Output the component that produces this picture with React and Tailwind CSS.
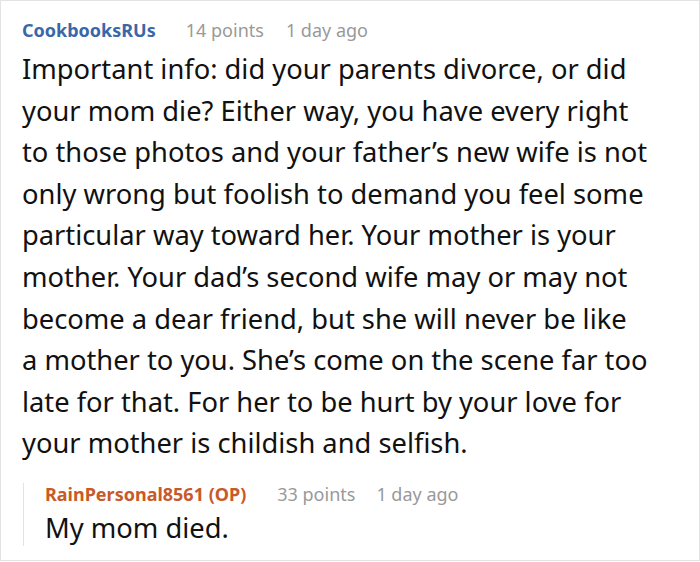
const lines = [
  "Important info: did your parents divorce, or did",
  "your mom die? Either way, you have every right",
  "to those photos and your father’s new wife is not",
  "only wrong but foolish to demand you feel some",
  "particular way toward her. Your mother is your",
  "mother. Your dad’s second wife may or may not",
  "become a dear friend, but she will never be like",
  "a mother to you. She’s come on the scene far too",
  "late for that. For her to be hurt by your love for",
  "your mother is childish and selfish.",
];

export default function App() {
  const font = { fontFamily: '"Noto Sans", "Open Sans", sans-serif' };
  return (
    <div style={font} className="w-[700px] h-[562px] bg-white">
      <div className="w-[700px] h-[561px] border border-[#e3e3e3] pl-[21px] pt-[16px] overflow-hidden">
        <div className="flex items-baseline text-[18px] leading-[26px]">
          <span className="font-bold text-[#3a67a8]">CookbooksRUs</span>
          <span className="ml-[30px] text-[#999999]">14 points</span>
          <span className="ml-[22px] text-[#999999]">1 day ago</span>
        </div>
        <p className="mt-[5px] text-[27.3px] leading-[41.6px] text-[#111]">
          {lines.map((l, i) => (
            <span key={i} className="block whitespace-nowrap">{l}</span>
          ))}
        </p>
        <div className="mt-[19px] ml-[1px] border-l border-[#e3e3e3] pl-[21px]">
          <div className="flex items-baseline text-[18px] leading-[22px]">
            <span className="font-bold text-[#c85a2a]">RainPersonal8561 (OP)</span>
            <span className="ml-[31px] text-[#999999]">33 points</span>
            <span className="ml-[21px] text-[#999999]">1 day ago</span>
          </div>
          <p className="mt-[5px] text-[27.3px] leading-[36px] text-[#111]">My mom died.</p>
        </div>
      </div>
    </div>
  );
}
